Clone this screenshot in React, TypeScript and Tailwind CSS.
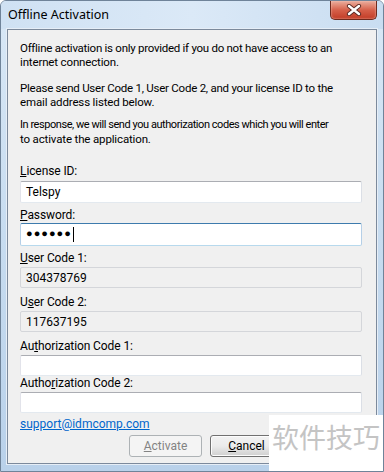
import React from 'react'

const ui = { fontFamily: 'Roboto, "Liberation Sans", Arial, sans-serif' }

function Label({ text, u, className }: { text: string; u: number; className: string }) {
  return (
    <div className={`h-[14px] leading-[14px] text-[12px] text-black tracking-[-0.1px] ${className}`}>
      {text.slice(0, u)}
      <span className="underline">{text[u]}</span>
      {text.slice(u + 1)}
    </div>
  )
}

function Field({
  value,
  className,
  disabled,
  focused,
  children,
}: {
  value?: string
  className: string
  disabled?: boolean
  focused?: boolean
  children?: React.ReactNode
}) {
  let box = 'bg-white border border-[#abadb3] border-l-[#e2e3ea] border-r-[#dbdfe6] border-b-[#e3e9ef]'
  if (disabled) box = 'bg-[#f0f0f0] border border-[#d4d6da]'
  if (focused) box = 'bg-white border border-[#3d7bad] border-l-[#b5cfe7] border-r-[#b5cfe7] border-b-[#b7d9ed]'
  return (
    <div className={`w-[342px] rounded-[2px] flex items-center pl-[5px] text-[12px] text-black ${box} ${className}`}>
      {value}
      {children}
    </div>
  )
}

export default function App() {
  return (
    <div
      style={ui}
      className="relative w-[384px] h-[472px] overflow-hidden flex flex-col rounded-t-[6px] border border-[#6f8399] bg-gradient-to-b from-[#d9e8f6] via-[#c7dcf0] to-[#b9d1ea]"
    >
      {/* title bar */}
      <div className="h-[28px] flex items-start justify-between bg-gradient-to-r from-[#cfe1f3] via-[#dbe9f7] to-[#c9ddf1]">
        <div
          className="pl-[7px] pt-[6px] text-[12.5px] leading-[16px] text-black"
          style={{ fontFamily: '"Noto Sans", sans-serif' }}
        >
          Offline Activation
        </div>
        <div className="mr-[6px] w-[47px] h-[19px] rounded-b-[5px] border border-t-0 border-[#6e2a1e] bg-gradient-to-b from-[#e9ad9d] via-[#d6604a] to-[#c23a24] flex items-center justify-center shadow-[inset_0_0_2px_#f7c9bc]">
          <svg width="16" height="12" viewBox="0 0 16 12">
            <path d="M3 2 L13 10 M13 2 L3 10" stroke="#5a2a24" strokeWidth="4.2" strokeLinecap="round" />
            <path d="M3 2 L13 10 M13 2 L3 10" stroke="#ffffff" strokeWidth="2.4" strokeLinecap="round" />
          </svg>
        </div>
      </div>

      {/* client area */}
      <div className="mx-[6px] mb-[7px] flex-1 border border-[#7c8a9c] bg-[#f0f0f0] pl-[12px] pt-[11px] flex flex-col shadow-[0_0_0_1px_#e6eef7]">
        <div className="text-[11.5px] leading-[14px] text-black whitespace-nowrap">
          <p className="tracking-[-0.27px]">Offline activation is only provided if you do not have access to an</p>
          <p className="tracking-[-0.15px]">internet connection.</p>
          <p className="mt-[12px] tracking-[-0.24px]">Please send User Code 1, User Code 2, and your license ID to the</p>
          <p className="tracking-[-0.15px]">email address listed below.</p>
          <p className="mt-[9px] text-[11px] tracking-[-0.45px]">In response, we will send you authorization codes which you will enter</p>
          <p className="tracking-[-0.15px]">to activate the application.</p>
        </div>

        <Label text="License ID:" u={0} className="mt-[18px]" />
        <Field value="Telspy" className="mt-[3px] h-[22px]" />

        <Label text="Password:" u={0} className="mt-[5px]" />
        <Field focused className="mt-[1px] h-[23px] tracking-[1px]">
          <span className="text-[11px]">●●●●●●</span>
          <span className="ml-[1px] w-[1px] h-[15px] bg-black" />
        </Field>

        <Label text="User Code 1:" u={0} className="mt-[5px]" />
        <Field disabled value="304378769" className="mt-[2px] h-[21px]" />

        <Label text="User Code 2:" u={1} className="mt-[7px]" />
        <Field disabled value="117637195" className="mt-[2px] h-[21px]" />

        <Label text="Authorization Code 1:" u={2} className="mt-[7px]" />
        <Field className="mt-[2px] h-[21px]" />

        <Label text="Authorization Code 2:" u={5} className="mt-[0px]" />
        <Field className="mt-[2px] h-[21px]" />

        <div className="mt-[4px] h-[14px] leading-[14px] text-[12px] text-[#0066cc] underline">support@idmcomp.com</div>

        <div className="mt-[4px] flex pl-[109px] gap-[8px]">
          <div className="w-[73px] h-[22px] rounded-[3px] border border-[#adb2b5] bg-[#f4f4f4] flex items-center justify-center text-[12px] text-[#838383]">
            <span className="underline">A</span>ctivate
          </div>
          <div className="w-[73px] h-[22px] rounded-[3px] border border-[#707070] bg-gradient-to-b from-[#f2f2f2] via-[#ebebeb] to-[#cfcfcf] flex items-center justify-center text-[12px] text-black shadow-[inset_0_0_0_1px_#fcfcfc]">
            <span className="underline">C</span>ancel
          </div>
        </div>
      </div>

      {/* watermark */}
      <div className="absolute left-[268px] top-[414px] w-[116px] h-[58px] bg-white flex items-start pt-[6px] pl-[3px]">
        <span
          className="text-[27px] leading-[32px] text-[#c4c4c4]"
          style={{ fontFamily: '"Noto Sans CJK SC", sans-serif' }}
        >
          软件技巧
        </span>
      </div>
    </div>
  )
}
